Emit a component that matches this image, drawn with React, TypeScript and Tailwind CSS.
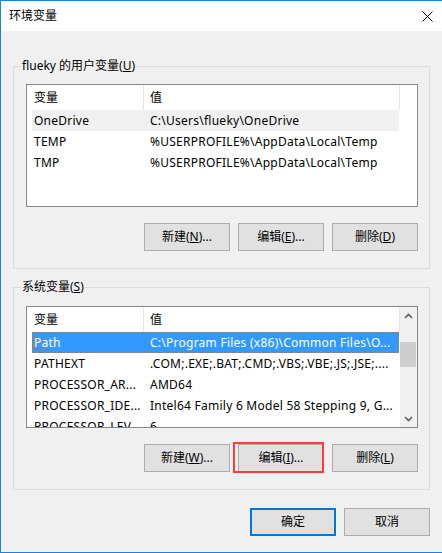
import React from 'react';

type Row = { name: string; value: string };

const userVars: Row[] = [
  { name: 'OneDrive', value: 'C:\\Users\\flueky\\OneDrive' },
  { name: 'TEMP', value: '%USERPROFILE%\\AppData\\Local\\Temp' },
  { name: 'TMP', value: '%USERPROFILE%\\AppData\\Local\\Temp' },
];

const sysVars: Row[] = [
  { name: 'Path', value: 'C:\\Program Files (x86)\\Common Files\\O...' },
  { name: 'PATHEXT', value: '.COM;.EXE;.BAT;.CMD;.VBS;.VBE;.JS;.JSE;....' },
  { name: 'PROCESSOR_AR...', value: 'AMD64' },
  { name: 'PROCESSOR_IDE...', value: 'Intel64 Family 6 Model 58 Stepping 9, G...' },
  { name: 'PROCESSOR_LEV...', value: '6' },
];

function Btn({ children, primary }: { children: React.ReactNode; primary?: boolean }) {
  return (
    <div
      className={
        primary
          ? 'w-[86px] h-[28px] border-2 border-[#0078d7] bg-[#e1e1e1] flex items-center justify-center'
          : 'w-[86px] h-[28px] border border-[#adadad] bg-[#e1e1e1] flex items-center justify-center'
      }
    >
      {children}
    </div>
  );
}

function Header() {
  return (
    <div className="flex h-[25px] items-center shrink-0">
      <div className="w-[117px] h-full pl-[7px] border-r border-[#e5e5e5] flex items-center">变量</div>
      <div className="w-[256px] h-full pl-[6px] border-r border-[#e5e5e5] flex items-center">值</div>
    </div>
  );
}

function ListRow({ row, state }: { row: Row; state?: 'hover' | 'selected' }) {
  let cls = 'flex w-[367px] h-[21px] items-center shrink-0 whitespace-nowrap overflow-hidden tracking-[0.25px]';
  if (state === 'hover') cls += ' bg-[#f0f0f0]';
  if (state === 'selected') cls += ' bg-[#3399ff] text-white border border-dotted border-[#c8731f]';
  return (
    <div className={cls}>
      <div className={state === 'selected' ? 'w-[117px] pl-[1px]' : 'w-[118px] pl-[2px]'}>{row.name}</div>
      <div className="flex-1">{row.value}</div>
    </div>
  );
}

function Chevron({ down }: { down?: boolean }) {
  return (
    <svg width="9" height="6" viewBox="0 0 9 6">
      <path
        d={down ? 'M1 1 L4.5 4.5 L8 1' : 'M1 5 L4.5 1.5 L8 5'}
        fill="none"
        stroke="#606060"
        strokeWidth="1.6"
      />
    </svg>
  );
}

function GroupBox({
  legend,
  padTop,
  children,
}: {
  legend: React.ReactNode;
  padTop: string;
  children: React.ReactNode;
}) {
  return (
    <div className={`relative w-[417px] h-[203px] border border-[#dcdcdc] pl-[12px] ${padTop}`}>
      <span className="absolute left-[7px] top-[-9px] px-[1px] leading-[16px] bg-[#f0f0f0]">{legend}</span>
      {children}
    </div>
  );
}

export default function App() {
  return (
    <div className="w-[442px] h-[553px] border-l border-t border-b border-[#1883d7] flex flex-col text-[12px] text-black font-['Noto_Sans','Noto_Sans_CJK_SC',sans-serif] overflow-hidden">
      {/* Title bar */}
      <div className="h-[30px] bg-white flex items-center justify-between pl-[8px] shrink-0">
        <span className="text-[12px]">环境变量</span>
        <svg className="mr-[9px]" width="11" height="11" viewBox="0 0 11 11">
          <path d="M0.5 0.5 L10.5 10.5 M10.5 0.5 L0.5 10.5" stroke="#000" strokeWidth="1" />
        </svg>
      </div>

      {/* Body */}
      <div className="flex-1 bg-[#f0f0f0] pl-[12px] pt-[35px] flex flex-col">
        {/* User variables */}
        <GroupBox
          legend={
            <>
              flueky 的用户变量(<u>U</u>)
            </>
          }
          padTop="pt-[17px]"
        >
          <div className="w-[392px] h-[123px] border border-[#828790] bg-white flex flex-col">
            <Header />
            <div className="pl-[5px] flex flex-col">
              {userVars.map((r, i) => (
                <ListRow key={r.name} row={r} state={i === 0 ? 'hover' : undefined} />
              ))}
            </div>
          </div>
          <div className="w-[392px] mt-[16px] flex justify-end gap-[8px]">
            <Btn>
              新建(<u>N</u>)...
            </Btn>
            <Btn>
              编辑(<u>E</u>)...
            </Btn>
            <Btn>
              删除(<u>D</u>)
            </Btn>
          </div>
        </GroupBox>

        {/* System variables */}
        <div className="mt-[18px]">
          <GroupBox
            legend={
              <>
                系统变量(<u>S</u>)
              </>
            }
            padTop="pt-[18px]"
          >
            <div className="w-[392px] h-[122px] border border-[#828790] bg-white flex overflow-hidden">
              <div className="w-[373px] flex flex-col overflow-hidden">
                <Header />
                <div className="pl-[5px] flex flex-col">
                  {sysVars.map((r, i) => (
                    <ListRow key={r.name} row={r} state={i === 0 ? 'selected' : undefined} />
                  ))}
                </div>
              </div>
              {/* Scrollbar */}
              <div className="w-[17px] bg-[#f0f0f0] flex flex-col items-center">
                <div className="h-[17px] flex items-center justify-center">
                  <Chevron />
                </div>
                <div className="flex-1 w-full pt-[18px]">
                  <div className="w-[16px] h-[25px] bg-[#cdcdcd]" />
                </div>
                <div className="h-[17px] flex items-center justify-center">
                  <Chevron down />
                </div>
              </div>
            </div>
            <div className="w-[392px] mt-[16px] flex justify-end gap-[8px]">
              <Btn>
                新建(<u>W</u>)...
              </Btn>
              <div className="relative">
                <Btn>
                  编辑(<u>I</u>)...
                </Btn>
                <div className="absolute left-[-5px] top-[-2px] right-0 bottom-[-1px] border-2 border-[#ff3b3b]" />
              </div>
              <Btn>
                删除(<u>L</u>)
              </Btn>
            </div>
          </GroupBox>
        </div>

        {/* Dialog buttons */}
        <div className="w-[417px] mt-[18px] flex justify-end gap-[8px]">
          <Btn primary>确定</Btn>
          <Btn>取消</Btn>
        </div>
      </div>
    </div>
  );
}
